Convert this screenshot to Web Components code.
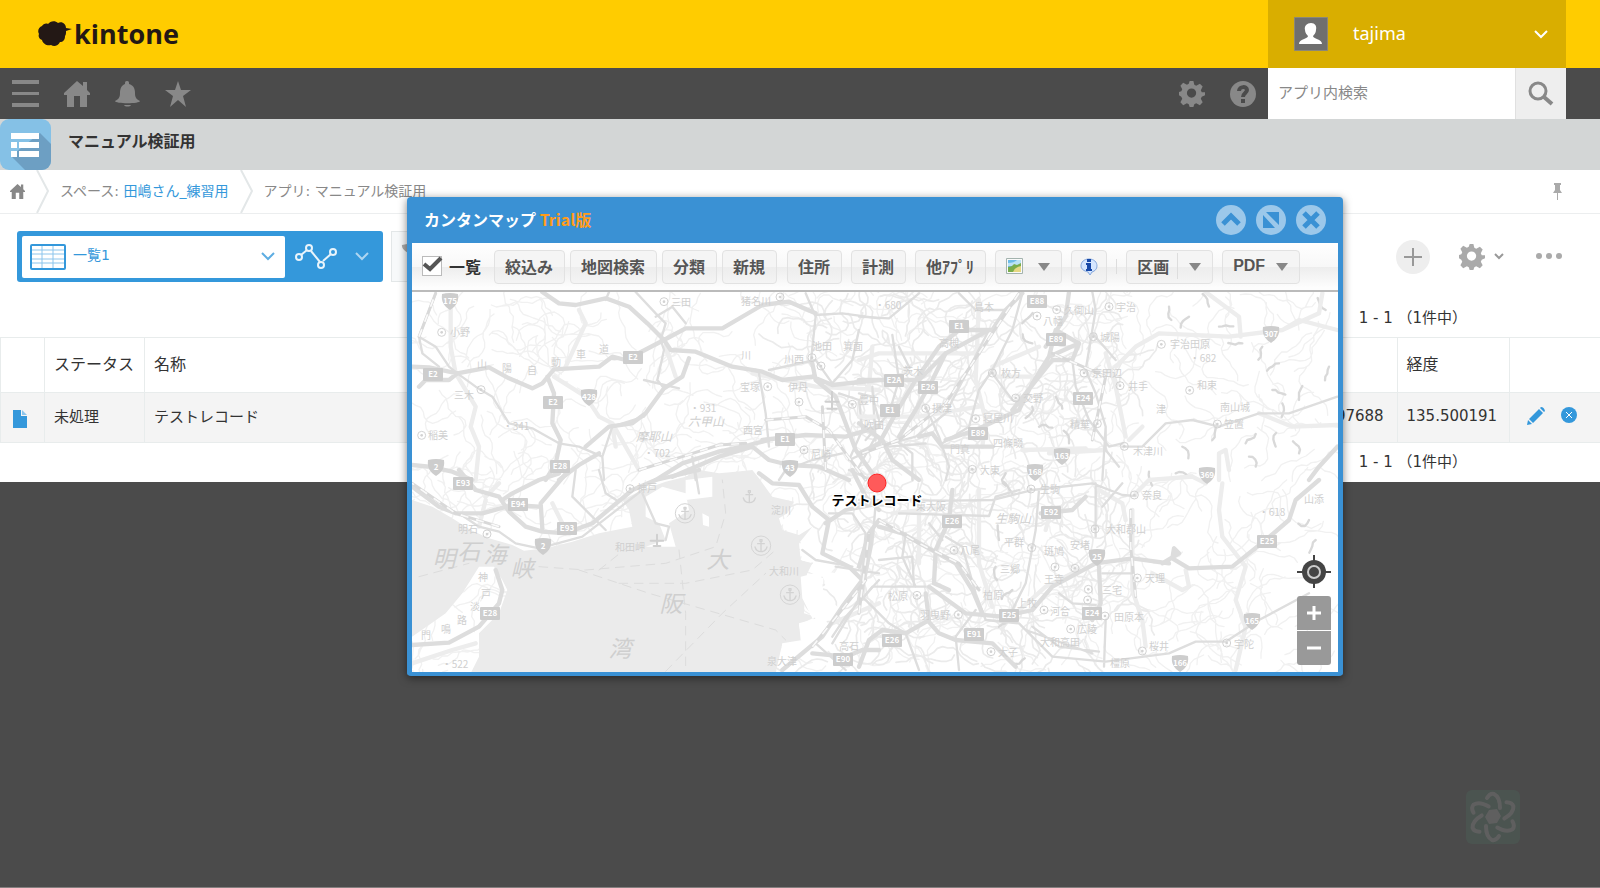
<!DOCTYPE html>
<html lang="ja">
<head>
<meta charset="utf-8">
<title>マニュアル検証用</title>
<style>
    body {
        margin: 0;
        min-height: 100vh;
        box-sizing: border-box;
        background-color: #4b4b4b;
        border-bottom: 1px solid #857f7f;
        font-family: "DejaVu Sans", "Noto Sans CJK JP", sans-serif;
        font-size: 15px;
        color: #333;
        overflow: hidden;
    }
</style>
</head>
<body>
<kintone-app></kintone-app>

<script>
const baseStyle = `
    <style>
        * { box-sizing: border-box; }
        :host { display: block; }
        svg { display: block; flex: none; }
        button {
            margin: 0;
            padding: 0;
            border: 0;
            background: none;
            font: inherit;
            color: inherit;
            display: flex;
            align-items: center;
            cursor: pointer;
        }
        a { color: inherit; text-decoration: none; }
    </style>
`

const gearPath = 'M11 0h4l1 4 2 1 4-2 3 3-2 4 1 2 4 0v3l-4 2-1 2 2 4-3 3-4-2-2 1-1 3h-4l-1-3-2-1-4 2-3-3 2-4-1-2-3-2v-3l3-1 1-2-2-4 3-3 4 2 2-1zM13 8a5 5 0 1 0 0 10 5 5 0 0 0 0-10z'
const housePath = 'M13 0l6 5V1h4v8l3 3v2h-3v12h-7V15h-6v11H3V14H0v-2z'

/**
 * @param {string} name Tag name
 * @param {string} html Content of shadow root
 */
function defineComponent(name, html) {
    const template = document.createElement('template')
    template.innerHTML = baseStyle + html
    customElements.define(name, class extends HTMLElement {
        constructor() {
            super()
            this.attachShadow({ mode: 'open' })
            this.shadowRoot.appendChild(template.content.cloneNode(true))
        }
    })
}

defineComponent('brand-header', `
    <style>
        :host {
            display: flex;
            justify-content: space-between;
            height: 68px;
            padding: 0 34px 0 38px;
            background-color: #fc0;
        }
        .logo { display: flex; align-items: center; gap: 2px; color: #231815; }
        .logo span { font: bold 27px/34px "Open Sans", "Noto Sans", sans-serif; }
        .user {
            width: 298px;
            padding: 0 18px 0 26px;
            background-color: #d9ae00;
            color: white;
            font-size: 18px;
            font-family: "Noto Sans", sans-serif;
        }
        .user span { flex: 1; text-align: left; padding: 0 0 2px 25px; }
    </style>
    <a class="logo" href="#" aria-label="kintone">
        <svg width="34" height="26" viewBox="0 0 34 26" fill="#231815">
            <path d="M10 3c2-3 7-4 10-1 4-2 8 1 8 5l6 1-6 2c0 2 0 4-1 5 0 4-2 6-5 6-2 4-6 5-9 3-4 1-8-1-9-5-3-1-4-4-3-6-2-3 0-7 3-8 1-2 4-3 6-2z"/>
        </svg>
        <span>kintone</span>
    </a>
    <button class="user">
        <svg width="34" height="34" viewBox="0 0 34 34">
            <path fill="#6f6f6f" stroke="#8b8778" d="M.5.5h33v33H.5z"/>
            <path fill="white" d="M17 6c4 0 6 3 5 7 0 3-2 5-3 6 0 3 9 3 9 8H5c0-5 9-5 9-8-1-1-3-3-3-6-1-4 2-7 6-7z"/>
        </svg>
        <span>tajima</span>
        <svg width="14" height="9" viewBox="0 0 14 9" fill="none" stroke="white" stroke-width="2"><path d="M1 1l6 6 6-6"/></svg>
    </button>
`)

defineComponent('global-nav', `
    <style>
        :host {
            display: flex;
            align-items: center;
            height: 51px;
            padding: 0 34px 0 12px;
            background-color: #4b4b4b;
            color: #888;
        }
        nav { display: flex; align-items: center; gap: 25px; }
        .tools { margin-left: auto; margin-right: 12px; }
        form { display: flex; width: 298px; height: 51px; }
        input {
            flex: 1;
            min-width: 0;
            border: 0;
            padding: 0 10px 4px;
            background: white;
            font: 15px "Noto Sans CJK JP", sans-serif;
        }
        input::placeholder { color: #888; }
        .find { width: 51px; justify-content: center; background-color: #eee; border-left: 1px solid #e0e0e0; }
    </style>
    <nav>
        <button aria-label="メニュー"><svg width="27" height="27" viewBox="0 0 27 27" fill="#888"><path d="M0 0h27v4H0zM0 12h27v3H0zM0 23h27v4H0z"/></svg></button>
        <button aria-label="ポータル"><svg width="26" height="26" viewBox="0 0 26 26" fill="#888"><path d="${housePath}"/></svg></button>
        <button aria-label="通知"><svg width="25" height="26" viewBox="0 0 25 26" fill="#888"><path d="M12 0c2 0 2 1 2 3 4 1 6 4 6 9 0 4 1 6 5 8 0 3-25 3-25 0 4-2 5-4 5-8 0-5 2-8 5-9 0-2 0-3 2-3zM9 24h7c-1 2-6 2-7 0z"/></svg></button>
        <button aria-label="お気に入り"><svg width="26" height="26" viewBox="0 0 26 26" fill="#888"><path d="M13 0l3 9h10l-8 6 3 11-8-7-8 7 3-11-8-6h10z"/></svg></button>
    </nav>
    <nav class="tools">
        <button aria-label="設定"><svg width="26" height="26" viewBox="0 0 27 28" fill="#888" fill-rule="evenodd"><path d="${gearPath}"/></svg></button>
        <button aria-label="ヘルプ"><svg width="26" height="26" viewBox="0 0 26 26"><circle cx="13" cy="13" r="13" fill="#888"/><path fill="none" stroke="#4b4b4b" stroke-width="4" d="M9 10c0-5 8-5 8-1 0 3-4 3-4 7"/><path fill="#4b4b4b" d="M11 18h4v4h-4z"/></svg></button>
    </nav>
    <form>
        <input type="text" placeholder="アプリ内検索" aria-label="アプリ内検索">
        <button class="find" type="button" aria-label="検索"><svg width="26" height="26" viewBox="0 0 26 26" fill="none" stroke="#888"><circle cx="10" cy="10" r="8" stroke-width="3"/><path stroke-width="4" d="M16 16l8 7"/></svg></button>
    </form>
`)

defineComponent('app-title', `
    <style>
        :host { display: flex; gap: 17px; height: 51px; background-color: #d3d6d6; }
        h1 { margin: 0; padding-top: 9px; font: bold 16px/24px "Noto Sans CJK JP", sans-serif; }
    </style>
    <svg width="51" height="51" viewBox="0 0 51 51">
        <clipPath id="round"><rect width="51" height="51" rx="9"/></clipPath>
        <g clip-path="url(#round)">
            <path fill="#85c1e6" d="M0 0h51v51H0z"/>
            <path fill="#6d9fc3" d="M40 14l11 11v26H25L11 37z"/>
            <path fill="white" d="M11 14h28v6H11zM11 23h6v6h-6zM19 23h20v6H19zM11 32h6v6h-6zM19 32h20v6H19z"/>
        </g>
    </svg>
    <h1><slot></slot></h1>
`)

defineComponent('bread-crumbs', `
    <style>
        :host {
            display: flex;
            align-items: center;
            height: 44px;
            padding: 0 38px 0 10px;
            background-color: white;
            border-bottom: 1px solid #eceeef;
            font-size: 14px;
            color: #888;
        }
        .sep { margin: 0 11px; }
        span { padding-bottom: 4px; }
        span a { color: #3498db; }
        .pin { margin-left: auto; }
    </style>
    <a href="#" aria-label="ポータル"><svg width="15" height="15" viewBox="0 0 26 26" fill="#888"><path d="${housePath}"/></svg></a>
    <svg class="sep" width="13" height="43" viewBox="0 0 13 43" fill="none" stroke="#e3e7e8" stroke-width="2"><path d="M1 0l11 21L1 43"/></svg>
    <span>スペース: <a href="#">田嶋さん_練習用</a></span>
    <svg class="sep" width="13" height="43" viewBox="0 0 13 43" fill="none" stroke="#e3e7e8" stroke-width="2"><path d="M1 0l11 21L1 43"/></svg>
    <span>アプリ: マニュアル検証用</span>
    <button class="pin" aria-label="固定"><svg width="9" height="17" viewBox="0 0 9 17" fill="#aaa"><path d="M1 0h7v2H7v5l2 3H5v7H4v-7H0l2-3V2H1z"/></svg></button>
`)

defineComponent('view-bar', `
    <style>
        :host {
            display: flex;
            align-items: center;
            justify-content: space-between;
            padding: 17px 38px 17px 17px;
        }
        .group { display: flex; align-items: center; }
        .views {
            display: flex;
            align-items: center;
            width: 366px;
            height: 51px;
            padding-left: 5px;
            background-color: #3498db;
            border-radius: 3px;
        }
        label {
            display: grid;
            grid-template-columns: 36px 1fr 14px;
            align-items: center;
            width: 263px;
            height: 42px;
            padding: 0 10px 0 8px;
            background-color: white;
            border-radius: 2px;
        }
        label svg { grid-row: 1; grid-column: 1; pointer-events: none; }
        label svg:last-child { grid-column: 3; }
        select {
            grid-row: 1;
            grid-column: 1 / -1;
            appearance: none;
            border: 0;
            height: 34px;
            padding: 0 0 4px 43px;
            background: none;
            font: 14px "DejaVu Sans", "Noto Sans CJK JP", sans-serif;
            color: #3498db;
        }
        .graph { gap: 17px; margin-left: 9px; }
        .filter {
            width: 51px;
            height: 51px;
            margin-left: 8px;
            padding-left: 9px;
            background-color: #f7f9fa;
            border: 1px solid #e3e7e8;
        }
        .add { width: 34px; height: 34px; justify-content: center; border-radius: 50%; background-color: #eee; }
        .config { gap: 9px; margin-left: 29px; }
        .more { margin-left: 32px; }
    </style>
    <div class="group">
        <div class="views">
            <label>
                <svg width="36" height="26" viewBox="0 0 36 26" fill="none" stroke="#3498db"><rect x="1" y="1" width="34" height="24" rx="1" stroke-width="2"/><path stroke="#8cc5ec" d="M2 6h32M2 10h32M2 15h32M2 19h32M12 2v22M23 2v22"/></svg>
                <select aria-label="一覧の選択"><option>一覧1</option></select>
                <svg width="14" height="9" viewBox="0 0 14 9" fill="none" stroke="#5dade2" stroke-width="2"><path d="M1 1l6 6 6-6"/></svg>
            </label>
            <button class="graph" aria-label="グラフ">
                <svg width="44" height="27" viewBox="0 0 44 27" fill="none" stroke="#e9f4fb" stroke-width="2"><path d="M7 12l6-5M17 8l9 11M29 18l8-7"/><circle cx="5" cy="14" r="3"/><circle cx="15" cy="5" r="3"/><circle cx="27" cy="22" r="3"/><circle cx="39" cy="9" r="3"/></svg>
                <svg width="14" height="9" viewBox="0 0 14 9" fill="none" stroke="#aed6f1" stroke-width="2"><path d="M1 1l6 6 6-6"/></svg>
            </button>
        </div>
        <button class="filter" aria-label="絞り込む"><svg width="26" height="26" viewBox="0 0 26 26" fill="#aaa"><path d="M1 1q12-3 24 0c1 5-7 8-8 12v9l-7 4V13C9 9 0 6 1 1z"/></svg></button>
    </div>
    <div class="group">
        <button class="add" aria-label="レコードを追加"><svg width="18" height="18" viewBox="0 0 18 18" stroke="#999" stroke-width="2"><path d="M9 0v18M0 9h18"/></svg></button>
        <button class="config" aria-label="アプリの設定">
            <svg width="26" height="26" viewBox="0 0 27 28" fill="#aaa" fill-rule="evenodd"><path d="${gearPath}"/></svg>
            <svg width="10" height="7" viewBox="0 0 10 7" fill="none" stroke="#999" stroke-width="2"><path d="M1 1l4 4 4-4"/></svg>
        </button>
        <button class="more" aria-label="オプション"><svg width="26" height="7" viewBox="0 0 26 7" fill="#aaa"><circle cx="3" cy="3" r="3"/><circle cx="13" cy="3" r="3"/><circle cx="23" cy="3" r="3"/></svg></button>
    </div>
`)

defineComponent('page-range', `
    <style>
        :host {
            display: flex;
            justify-content: flex-end;
            padding: 0 133px 0 0;
            height: 38px;
            line-height: 39px;
            font-size: 15px;
        }
        span { white-space: pre; }
    </style>
    <span><slot></slot></span>
`)

defineComponent('record-table', `
    <style>
        table { width: 100%; border-collapse: collapse; table-layout: fixed; }
        th, td { border: 1px solid #e8ecec; text-align: left; font-weight: normal; padding: 0 0 0 9px; }
        th { height: 55px; padding-bottom: 5px; font-size: 16px; }
        td { height: 50px; padding-bottom: 4px; background-color: #f4f4f4; font-size: 15px; }
        td:first-child { padding: 3px 0 0 12px; }
        th:last-child, td:last-child { border-right: 0; }
        .mark { width: 44px; }
        .status { width: 100px; }
        .lat { width: 104px; }
        .lng { width: 112px; }
        .edit { width: 91px; }
        div { display: flex; align-items: center; gap: 16px; padding-left: 8px; }
    </style>
    <table>
        <thead>
            <tr>
                <th class="mark"></th>
                <th class="status">ステータス</th>
                <th>名称</th>
                <th class="lat"></th>
                <th class="lng">経度</th>
                <th class="edit"></th>
            </tr>
        </thead>
        <tbody>
            <tr>
                <td><a href="#" aria-label="詳細"><svg width="14" height="18" viewBox="0 0 14 18"><path fill="#3498db" d="M0 0h8v6h6v12H0z"/><path fill="#8cc5ec" d="M9 0l5 5H9z"/></svg></a></td>
                <td>未処理</td>
                <td>テストレコード</td>
                <td>34.697688</td>
                <td>135.500191</td>
                <td>
                    <div>
                        <button aria-label="編集"><svg width="18" height="18" viewBox="0 0 18 18" fill="#3498db"><path d="M0 18l1-5 4 4zM2 12L12 2l4 4L6 16zM13 1l1-1q3 0 4 4l-1 1z"/></svg></button>
                        <button aria-label="削除"><svg width="17" height="17" viewBox="0 0 17 17"><circle cx="8" cy="8" r="8" fill="#3498db"/><path stroke="white" stroke-width="1" d="M5 5l6 6M11 5l-6 6"/></svg></button>
                    </div>
                </td>
            </tr>
        </tbody>
    </table>
`)

defineComponent('tool-button', `
    <style>
        :host { display: flex; }
        button {
            height: 34px;
            padding: 0 11px 2px 10px;
            border: 1px solid #e2e2e2;
            border-radius: 4px;
            background: linear-gradient(#f5f5f5 50%, #ededed 51%, #f4f4f4);
            color: #555;
            font: bold 16px "Liberation Sans", "Noto Sans CJK JP", sans-serif;
            white-space: nowrap;
        }
        :host([tight]) button { padding: 0 8px; }
    </style>
    <button><slot></slot></button>
`)

defineComponent('map-toolbar', `
    <style>
        :host {
            display: flex;
            align-items: center;
            height: 49px;
            padding: 0 10px;
            background: linear-gradient(#fff, #f8f8f8 50%, #ededed 51%, #fdfdfd 95%);
            border-bottom: 2px solid #bbb;
            color: #333;
        }
        label { display: flex; align-items: center; gap: 6px; margin-right: 13px; padding-bottom: 2px; font: bold 16px "Noto Sans CJK JP", sans-serif; }
        .check { display: grid; }
        .check > * { grid-area: 1 / 1; }
        .check svg { pointer-events: none; }
        input { appearance: none; width: 20px; height: 20px; margin: 0; background: white; border: 1px solid #bbb; }
        .near, .far { display: flex; align-items: center; gap: 5px; }
        .far { gap: 9px; margin-left: 10px; }
        .line { width: 1px; height: 15px; background: #ddd; }
        .rule { width: 1px; height: 26px; margin: 0 11px 0 8px; background: #ddd; }
        .arrow { margin-top: 2px; }
        .drop { margin-left: 15px; }
        .next { margin-left: 11px; }
    </style>
    <label>
        <span class="check">
            <input type="checkbox" checked>
            <svg width="21" height="20" viewBox="0 0 21 20" fill="none" stroke="#555" stroke-width="4"><path d="M2 8l6 5L19 2"/></svg>
        </span>
        <span>一覧</span>
    </label>
    <div class="near">
        <tool-button>絞込み</tool-button>
        <tool-button>地図検索</tool-button>
        <tool-button>分類</tool-button>
        <tool-button>新規</tool-button>
    </div>
    <div class="far">
        <tool-button>住所</tool-button>
        <tool-button>計測</tool-button>
        <tool-button>他ｱﾌﾟﾘ</tool-button>
        <tool-button>
            <svg width="17" height="16" viewBox="0 0 17 16"><path fill="#fafafa" stroke="#a3b3ae" d="M.5.5h16v15H.5z"/><path fill="#6bbbe8" d="M2 2h13v12H2z"/><path fill="#b9e2f5" d="M2 5q6 0 9-3h4v6H2z"/><path fill="#79ad4b" d="M2 9q4 0 6-3l3 1 4-2v9H2z"/><path fill="#e6d783" d="M7 14q2-5 8-6v6z"/></svg>
            <svg class="arrow drop" width="12" height="8" viewBox="0 0 12 8" fill="#888"><path d="M0 0h12L6 8z"/></svg>
        </tool-button>
        <tool-button tight>
            <svg width="18" height="18" viewBox="0 0 18 18"><path fill="#d5e6ff" stroke="#86a8dc" d="M9 1c5 0 8 3 8 7 0 3-2 5-5 6l-2 3-2-3c-4-1-7-3-7-6 0-4 3-7 8-7z"/><path fill="#1849a8" d="M7 1h4v3H7zM6 5h5v6h1v2H6v-2h1V7H6z"/></svg>
        </tool-button>
        <span class="line"></span>
        <tool-button>
            <span>区画</span>
            <span class="rule"></span>
            <svg class="arrow" width="12" height="8" viewBox="0 0 12 8" fill="#888"><path d="M0 0h12L6 8z"/></svg>
        </tool-button>
        <tool-button>
            <span>PDF</span>
            <svg class="arrow next" width="12" height="8" viewBox="0 0 12 8" fill="#888"><path d="M0 0h12L6 8z"/></svg>
        </tool-button>
    </div>
`)

// Road map. Lines are drawn on a grid with three units to a pixel, in four tiles.
const seaPath = `
    M39 660L100 680 160 715 215 750 270 775 340 795 375 812 440 805 520 785 600 760 700 740 690 690 670 660 730 630 800 605
    860 590 900 570 960 580 1010 575 1060 570 1080 595 1120 650 1185 665 1165 700 1140 715 1150 750 1200 765 1240 740
    1200 790 1205 840 1240 850 1220 890 1215 1000 1250 1010 1200 1035 1210 1080 1150 1090 1130 1180 215 1180
    240 1130 240 1060 300 1000 325 930 310 900 285 860 240 860 190 940 140 1000 90 1035 39 1070z`

const landPaths = `
    M740 650l50-30 70 20 10 50-60 40 20 70-90 0 60-20-20-50-40-20z
    M860 600l80-10 0 60-80 10z M910 700l20 10 0 30-18-5z
    M1205 890l60-15 15 110 30-10 20 20-90 20-30-60z M1260 870l80 15 20 50-60 10z
    M1200 1030l70-20 25 30-60 60-30-20z M1150 1090l60 30-20 30-50 0z M1200 790l70 10-10 50-50-8z M1150 720l50-30 15 60-60 0z`

const tiles = [
    { x: 0, y: 0, wide: `
        M430 36L480 70 530 75 620 55 690 80 745 130 795 180 860 145 970 145 1090 75 1170 65 1250 100
        M39 260L90 262 175 280 270 262 330 295 400 325 430 310 465 268 600 260 640 230 680 240 795 180
        M60 320L80 300 150 300 175 280
        M795 180L815 210 890 215 1000 260 1090 275 1150 300 1240 290 1300 315 1440 300
        M445 290L465 340 460 430 485 480 470 550 440 600
        M770 600L850 550 960 515 1050 495 1110 480
        M560 500L630 440 700 430 740 400 795 325 850 290 870 235
        M39 555L90 560 160 575 220 600
        M1240 250L1250 300 1310 350 1340 430 1370 510 1420 580
        M820 590L960 530 1060 500 1110 540 1170 555 1260 560 1350 600
        M480 600L540 555 600 520
        M1090 480L1220 465 1340 470 1440 440`,
      thin: `
        M110 40L60 170 110 200 150 260 175 280 230 320 280 350 330 430 400 445 480 490 540 500 610 530
        M60 170L70 220 120 260 M710 36L770 100 800 130 785 180 795 210 775 300
        M770 110L820 80 860 130 M735 300L840 325 M775 300L795 325 735 410 640 440 610 530 615 600
        M630 36L620 60 M1220 40L1250 110 1235 250 M1250 105L1330 100 1440 115
        M1080 280L1100 400 1110 500 M1110 270L1250 240 1300 310 1360 240 1380 150
        M1320 340L1380 360 1390 450 1350 540 1440 500 M1140 600L1160 570 1240 540 1330 520
        M890 600L880 530 M1420 320L1430 480`,
      pale: `
        M155 60L155 200 170 280 230 380 215 440 240 500 230 600 M500 260L560 130 540 90
        M465 290L560 350 600 410 640 430 720 570 M800 200L830 290 M640 440L650 500
        M1060 280L1250 320 1440 330 M1420 200L1410 320` },
    { x: 1380, y: 0, wide: `
        M0 520L60 490 110 400 170 300 240 200 300 150 400 150 440 90 490 40
        M0 300L100 300 180 300 260 220 390 150
        M120 470L170 390 220 300 260 220
        M260 480L350 450 480 390 520 310 570 230 660 190 M570 230L590 150 660 190 640 240
        M460 390L580 240 640 240
        M630 36L620 110 560 200
        M180 470L220 460 250 500 400 500
        M1350 600L1380 560 1435 500
        M0 430L70 480 100 540 180 600`,
      thin: `
        M700 36L710 90 680 270 710 340 740 440 730 600 M640 240L650 320 690 420 750 500 790 490
        M100 165L120 300 90 400 20 480 M300 40L350 90 440 90 M0 110L90 115 180 40
        M490 40L460 150 400 270 360 330 330 440 250 490 M400 280L460 360 490 370
        M200 380L240 470 270 560 260 600 M390 150L260 400 170 470 60 500
        M790 500L850 500 920 430 1000 420 1080 440 1200 400 1290 400 1435 350
        M0 560L50 470 90 500 200 490 M740 440L740 510 780 560 M700 160L770 240
        M0 340L40 350 60 420 M120 200L150 260 M110 480L160 520 160 600`,
      pale: `
        M0 240L60 220 360 220 M770 260L830 200 900 160 1110 170 1270 150 1320 120 1435 150
        M1040 36L1140 110 1145 170 M1270 150L1380 100 1390 40 M740 220L770 320 800 470 M490 510L680 505
        M370 500L380 420 350 300 360 60 M0 410L180 410 360 380 M540 200L400 260 410 290 520 290
        M570 520L740 510 M850 440L810 480 M1200 400L1300 440 1435 435 M1080 600L1080 520 1100 510 1110 570` },
    { x: 0, y: 570, wide: `
        M39 50L120 110 170 130 250 130 340 105 420 110
        M180 0L230 60 300 80 330 125 380 170 430 185 500 190 580 160 640 110 700 60 770 30 900 0
        M310 90L340 70 420 30 480 10 M430 175L425 100 510 0
        M290 300L310 360 300 400 240 470 150 518 39 525
        M1080 10L1120 40 1200 45 1240 110 1290 150 1270 250 1350 290 1390 330 1330 410 1270 500 1150 600
        M1240 550L1340 560 1390 540 1440 540
        M1360 0L1400 80 1440 120 M1280 160L1340 120 1440 100`,
      thin: `
        M180 130L240 170 300 185 350 220 420 235 550 200 640 130 730 60
        M530 0L520 80 570 130 620 180 M600 0L620 70 660 95 M730 70L770 160 810 170 800 210
        M1300 500L1340 440 1440 330 M1430 100L1420 220 1390 370 1300 520
        M1290 130L1360 130 1400 190 1390 300 M1310 290L1440 310 M1250 520L1340 600
        M1210 240L1250 270 1360 290 M1350 0L1440 40 M890 10L900 70`,
      pale: `M240 170L260 90 M500 180L460 100 M300 40L260 80 M1440 400L1300 460 M39 580L160 540 230 520` },
    { x: 1380, y: 570, wide: `
        M0 290L30 190 60 150 M0 390L20 280 40 180
        M60 170L130 190 200 230 290 280 340 360 370 430
        M210 350L320 430 430 440 520 420 580 350 710 280 820 265 930 280 M910 280L960 250 945 235 940 265 990 295 1120 290 1220 210 1290 150 1310 90 1380 30
        M270 150L230 240 225 340 270 360 M545 130L640 120 680 80
        M205 450L240 490 290 510 400 520 470 590
        M0 590L30 510 70 480 140 490 210 450 200 370
        M720 290L725 400 700 450 M280 60L270 150`,
      thin: `
        M0 90L270 92 400 90 520 60 700 40 790 75 830 78 M120 130L390 138 410 80 480 60
        M710 40L710 200 M790 40L730 110 M540 60L530 180 500 340 460 420
        M260 200L310 230 350 370 380 450 480 460 580 560 740 575 930 550 1010 515 1100 515 1200 450 1350 370
        M0 370L90 460 140 490 180 600 M740 450L735 590 M200 350L40 350 0 400
        M600 370L640 400 710 405 M210 160L250 210 M350 420L290 500 300 600
        M140 190L130 260 170 350 M60 270L160 260 165 350 M730 310L820 310 820 260 M500 480L700 550
        M0 100L100 110 M520 470L600 530 720 545`,
      pale: `
        M180 80L180 280 M360 60L360 280 400 410 M580 110L560 180 M1090 40L1080 120 1090 200 1160 290 1130 390 1160 470 1130 600
        M830 70L870 30 1000 20 1040 40 M820 120L820 360 850 450 860 530 M980 300L990 350 970 360 880 310
        M470 430L560 350 660 300 M100 130L190 120 M720 60L790 100 800 150` }
]

const railPaths = `
    M300 740L170 700 39 610 M720 570L850 530 960 495 1040 490 M1100 420L1220 410 1290 450 1340 520 1400 600
    M1860 40L1760 190 1640 370 1500 480 1390 520 M1440 720L1560 790 1680 850 1740 930 M2080 480L2120 290 1960 220
    M1380 1000L1410 760 M2195 690L2195 800 2210 950 M60 170L110 40 M1280 570L1270 380 M1240 1100L1400 900`

const ferryPaths = `
    M60 890L210 850 M420 860L560 870 800 850 950 800 980 700 970 600 M540 870L750 940 1130 1050 1160 1080
    M660 910L860 910 1060 870 1130 810 M840 810L860 1000 860 1174 M800 1174L970 1000 1100 880 M600 870L700 790`

const shields = [
    ['E2', 101, 281], ['E2', 463, 365], ['E2', 701, 231], ['E28', 484, 557], ['E1', 1159, 476],
    ['E1', 1681, 138], ['E88', 1915, 64], ['E89', 1971, 176], ['E2A', 1484, 300], ['E26', 1587, 322], ['E1', 1472, 391],
    ['E24', 2051, 354], ['E89', 1738, 460], ['E93', 191, 608], ['E94', 356, 672], ['E93', 503, 744], ['E28', 274, 999],
    ['E90', 1331, 1138], ['E26', 1660, 722], ['E92', 1956, 695], ['E25', 2603, 782], ['E25', 1829, 1006], ['E24', 2080, 998],
    ['E91', 1724, 1063], ['E26', 1478, 1079]
]

const routes = [
    ['428', 571, 350], ['2', 110, 560], ['43', 1174, 565], ['307', 2616, 162], ['163', 1990, 528], ['168', 1909, 576],
    ['369', 2425, 586], ['2', 431, 798], ['25', 2095, 830], ['165', 2560, 1022], ['166', 2342, 1150], ['175', 153, 62]
]

// text, x, y of centre
const towns = [
    ['小野', 182, 157], ['三木', 194, 346], ['三田', 845, 66], ['猪名川', 1072, 62], ['宝塚', 1052, 320], ['伊丹', 1198, 322],
    ['川西', 1186, 236], ['箕面', 1361, 199], ['稲美', 117, 466], ['西宮', 1062, 450], ['尼崎', 1265, 522], ['山', 248, 253],
    ['陽', 324, 263], ['自', 398, 271], ['動', 470, 245], ['車', 545, 222], ['道', 616, 207], ['・931', 912, 383],
    ['・702', 775, 520], ['・341', 350, 437], ['池田', 1268, 198], ['川', 1042, 226], ['豊中', 1410, 360],
    ['・680', 1466, 74], ['島本', 1756, 82], ['久御山', 2040, 90], ['宇治', 2180, 80], ['八幡', 1962, 124], ['城陽', 2134, 170],
    ['高槻', 1650, 190], ['宇治田原', 2374, 193], ['・682', 2412, 235], ['枚方', 1835, 280], ['京田辺', 2123, 280],
    ['井手', 2216, 318], ['和束', 2425, 316], ['茨木', 1542, 272], ['摂津', 1628, 385], ['寝屋川', 1796, 415], ['交野', 1902, 355],
    ['津', 2285, 386], ['南山城', 2508, 380], ['精華', 2042, 431], ['笠置', 2505, 433], ['四條畷', 1826, 489], ['門真', 1684, 506],
    ['木津川', 2246, 514], ['大東', 1772, 569], ['吹田', 1425, 435], ['明石', 208, 748], ['神戸', 745, 624], ['和田岬', 694, 800],
    ['淀川', 1147, 690], ['大和川', 1155, 874], ['神', 252, 890], ['戸', 262, 942], ['淡', 229, 978], ['路', 190, 1020],
    ['鳴', 142, 1046], ['門', 82, 1064], ['泉大津', 1150, 1142], ['高石', 1350, 1098], ['・522', 168, 1152], ['東大阪', 1596, 678],
    ['生駒', 1952, 626], ['奈良', 2258, 646], ['大和郡山', 2180, 748], ['平群', 1846, 786], ['斑鳩', 1966, 812], ['安堵', 2042, 796],
    ['三郷', 1834, 868], ['八尾', 1714, 810], ['王寺', 1964, 896], ['天理', 2268, 894], ['柏原', 1782, 946], ['松原', 1496, 948],
    ['羽曳野', 1608, 1004], ['上牧', 1884, 968], ['河合', 1984, 994], ['三宅', 2138, 930], ['田原本', 2190, 1010], ['広陵', 2064, 1048],
    ['大和高田', 1984, 1086], ['太子', 1826, 1115], ['橿原', 2164, 1150], ['桜井', 2280, 1098], ['宇陀', 2536, 1092],
    ['・618', 2618, 696], ['山添', 2744, 658]
]

const rings = [
    [128, 157], [246, 329], [795, 65], [1143, 51], [1106, 320], [1239, 233], [68, 466], [1215, 510], [1200, 366], [1266, 258],
    [1360, 373], [1973, 89], [2130, 80], [1914, 108], [2083, 170], [2287, 193], [1780, 279], [2055, 279], [2163, 317], [2372, 331],
    [1850, 354], [1730, 416], [2095, 431], [2455, 432], [2176, 499], [1720, 568], [1580, 385], [264, 762], [693, 626],
    [2206, 645], [1896, 627], [2088, 747], [1665, 811], [1898, 803], [1968, 861], [2028, 865], [2215, 894], [1554, 946],
    [1678, 1004], [2015, 1047], [2118, 1008], [1776, 1115], [2230, 1113], [2483, 1089], [2068, 928], [2066, 960], [1935, 990]
]

class OsakaMap extends HTMLElement {
    constructor() {
        super()
        this.attachShadow({ mode: 'open' })
        this.shadowRoot.innerHTML = `${baseStyle}
            <style>
                :host { display: grid; background-color: white; overflow: hidden; }
                svg { grid-area: 1 / 1; width: 100%; height: 380px; }
                .line path { fill: none; stroke-linejoin: round; stroke-linecap: round; }
                .line .sea { fill: #ebebeb; }
                .line .land { fill: white; }
                .line .gap { stroke-linecap: butt; }
                .town { font-size: 10px; fill: #d0d0d0; }
                .badge { font-size: 8px; fill: white; font-weight: bold; }
                .bay { font-size: 23px; fill: #cfcfcf; font-style: italic; }
                .hill { font-size: 12px; fill: #cfcfcf; font-style: italic; }
                .pin { font-size: 13px; font-weight: bold; fill: black; stroke: white; stroke-width: 3px; paint-order: stroke; }
                text { text-anchor: middle; font-family: "Noto Sans CJK JP", sans-serif; }
            </style>
            <svg class="line" viewBox="39 36 2778 1140" preserveAspectRatio="xMidYMid slice">
                <path d="${this.minorRoads(560, 39, 2800)}" stroke="#f1f1f1" stroke-width="4"/>
                <path d="${this.minorRoads(240, 1240, 2160)}" stroke="#ebebeb" stroke-width="5"/>
                <path d="${this.ridges()}" stroke="#d9d9d9" stroke-width="7"/>
                <path class="sea" d="${seaPath}"/>
                <path class="land" d="${landPaths}"/>
                ${tiles.map(n => `<g transform="translate(${n.x} ${n.y})">
                    <path d="${n.pale}" stroke="#ededed" stroke-width="13"/>
                    <path d="${n.thin}" stroke="#dedede" stroke-width="7"/>
                    <path d="${n.wide}" stroke="#dddddd" stroke-width="13"/>
                </g>`).join('')}
                <path d="${railPaths}" stroke="#d9d9d9" stroke-width="9"/>
                <path class="gap" d="${railPaths}" stroke="#fafafa" stroke-width="5" stroke-dasharray="24 24"/>
                <path d="${ferryPaths}" stroke="#dcdcdc" stroke-width="3" stroke-dasharray="26 20"/>
                ${rings.map(n => `<circle cx="${n[0]}" cy="${n[1]}" r="12" fill="none" stroke="#d3d3d3" stroke-width="3"/><circle cx="${n[0]}" cy="${n[1]}" r="4" fill="#d3d3d3"/>`).join('')}
                ${[[858, 700, 29], [1086, 797, 29], [1173, 944, 29], [1051, 650, 0]].map(n => `<g transform="translate(${n[0]} ${n[1]})">
                    <circle r="${n[2]}" fill="none" stroke="#d5d5d5" stroke-width="3"/>
                    <path d="M0-12V17M-10-6H10M-18 4Q-14 18 0 18 14 18 18 4M-3-18h6v5h-6z" stroke="#d3d3d3" stroke-width="4"/>
                </g>`).join('')}
                <path d="M755 782h38M774 764v34M764 798h20M1280 365h38M1299 335v54M1285 386h28" stroke="#d0d0d0" stroke-width="6"/>
            </svg>
            <svg viewBox="0 0 926 380" preserveAspectRatio="xMidYMid slice">
                ${towns.map(n => this.label(n, 'town', 4)).join('')}
                ${shields.map(n => {
                    const [x, y] = this.toPixel(n)
                    return `<rect x="${x - 10}" y="${y - 6}" width="20" height="13" rx="1" fill="#cdcdcd"/>` + this.label(n, 'badge', 3)
                }).join('')}
                ${routes.map(n => {
                    const [x, y] = this.toPixel(n)
                    return `<path d="M${x - 8} ${y - 7}q8-2 16 0c1 8-2 12-8 16-6-4-9-8-8-16z" fill="#cdcdcd"/>` + this.label(n, 'badge', 3)
                }).join('')}
                ${[['明', 136, 838], ['石', 210, 815], ['海', 288, 825], ['峡', 370, 868], ['大', 957, 841], ['阪', 817, 973], ['湾', 664, 1107]].map(n => this.label(n, 'bay', 8)).join('')}
                ${[['六甲山', 920, 427], ['摩耶山', 766, 470], ['生駒山', 1842, 718]].map(n => this.label(n, 'hill', 4)).join('')}
                <circle cx="465" cy="191" r="9" fill="#ff5a5a" stroke="#f22"/>
                <text class="pin" x="465" y="213">テストレコード</text>
            </svg>`
    }

    toPixel(item) {
        return [Math.round((item[1] - 39) / 3), Math.round((item[2] - 36) / 3)]
    }

    label(item, kind, drop) {
        const [x, y] = this.toPixel(item)
        return `<text class="${kind}" x="${x}" y="${y + drop}">${item[0]}</text>`
    }

    random() {
        this.seed = ((this.seed || 7) * 16807) % 2147483647
        return this.seed / 2147483647
    }

    wander(x, y, steps, length) {
        let angle = this.random() * 6
        let d = `M${x | 0} ${y | 0}`
        for (let i = 0; i < steps; i++) {
            angle += (this.random() - 0.5) * 1.6
            x += Math.cos(angle) * length
            y += Math.sin(angle) * length
            d += `L${x | 0} ${y | 0}`
        }
        return d
    }

    minorRoads(count, left, right) {
        let d = ''
        for (let i = 0; i < count; i++)
            d += this.wander(left + this.random() * (right - left), 36 + this.random() * 1140, 12, 16)
        return d
    }

    // Prefecture borders in the mountains
    ridges() {
        const spots = [[1870, 130], [1900, 190], [1900, 380], [1920, 440], [1970, 350], [2310, 80], [2370, 110], [2430, 80],
            [2460, 140], [2530, 190], [2590, 200], [2640, 250], [2620, 330], [2650, 370], [2700, 360], [2790, 260], [2780, 90],
            [2350, 500], [2440, 480], [2540, 490], [2630, 500], [2700, 520], [2250, 575], [2330, 580], [2570, 560], [2730, 720],
            [1820, 580], [1840, 640], [1800, 780], [1790, 860], [1840, 930], [1800, 1040], [1840, 1150], [2750, 780], [2010, 490]]
        return spots.map(n => this.wander(n[0], n[1], 4, 11)).join('')
    }
}
customElements.define('osaka-map', OsakaMap)

defineComponent('map-controls', `
    <style>
        :host { display: flex; flex-direction: column; align-items: center; }
        .zoom {
            width: 34px;
            height: 34px;
            margin-top: 1px;
            justify-content: center;
            background-color: #999;
        }
        .in { border-radius: 3px 3px 0 0; margin-top: 8px; }
        .out { border-radius: 0 0 3px 3px; }
    </style>
    <button aria-label="現在地"><svg width="34" height="33" viewBox="0 0 34 33" fill="none"><path stroke="#444" stroke-width="2" d="M17 0v33M0 17h34"/><circle cx="17" cy="17" r="12" fill="#444"/><circle cx="17" cy="17" r="6" stroke="#ccc" stroke-width="2"/></svg></button>
    <button class="zoom in" aria-label="拡大"><svg width="14" height="14" viewBox="0 0 14 14" stroke="white" stroke-width="3"><path d="M7 0v14M0 7h14"/></svg></button>
    <button class="zoom out" aria-label="縮小"><svg width="14" height="14" viewBox="0 0 14 14" stroke="white" stroke-width="3"><path d="M0 7h14"/></svg></button>
`)

defineComponent('map-window', `
    <style>
        :host {
            background-color: #3a91d4;
            border: solid #3a91d4;
            border-width: 0 5px 4px;
            border-radius: 4px;
            box-shadow: 0 2px 8px rgba(0, 0, 0, 0.5);
        }
        header {
            display: flex;
            align-items: center;
            height: 46px;
            padding: 0 12px;
            font: bold 16px "Noto Sans CJK JP", sans-serif;
            color: white;
        }
        h2 { flex: 1; margin: 0; font: inherit; padding-bottom: 2px; }
        em { font-style: normal; color: #ff9c1a; }
        nav { display: flex; gap: 10px; }
        .body { position: relative; }
        map-controls { position: absolute; right: 7px; bottom: 7px; }
    </style>
    <header>
        <h2>カンタンマップ <em>Trial版</em></h2>
        <nav>
            <button aria-label="折りたたむ"><svg width="30" height="30" viewBox="0 0 30 30"><circle cx="15" cy="15" r="15" fill="#9cc8ea"/><path fill="none" stroke="#3a91d4" stroke-width="5" d="M7 19l8-8 8 8"/></svg></button>
            <button aria-label="最大化"><svg width="30" height="30" viewBox="0 0 30 30"><circle cx="15" cy="15" r="15" fill="#9cc8ea"/><path fill="#3a91d4" d="M10 7h13v13zM7 10l12 13H7z"/></svg></button>
            <button aria-label="閉じる"><svg width="30" height="30" viewBox="0 0 30 30"><circle cx="15" cy="15" r="15" fill="#9cc8ea"/><path stroke="#3a91d4" stroke-width="5" d="M8 8l14 14M22 8L8 22"/></svg></button>
        </nav>
    </header>
    <map-toolbar></map-toolbar>
    <div class="body">
        <osaka-map></osaka-map>
        <map-controls></map-controls>
    </div>
`)

defineComponent('chat-badge', `
    <style>
        :host { opacity: 0.8; }
    </style>
    <svg width="54" height="54" viewBox="0 0 54 54" fill="none" stroke="#656565" stroke-width="4" stroke-linecap="round">
        <rect width="54" height="54" rx="6" fill="#4b5752" stroke="none"/>
        ${[0, 60, 120, 180, 240, 300].map(n => `<path d="M21 8Q24 3 28 4 34 7 34 18" transform="rotate(${n} 27 27)"/>`).join('')}
        <path fill="#656565" stroke="none" d="M23 20l8-1 4 7-4 7-8 1-4-7z"/>
    </svg>
`)

defineComponent('kintone-app', `
    <style>
        main { background-color: white; padding-bottom: 1px; }
        map-window { position: absolute; top: 197px; left: 407px; right: 257px; }
        chat-badge { position: absolute; right: 80px; bottom: 44px; }
    </style>
    <brand-header></brand-header>
    <global-nav></global-nav>
    <app-title>マニュアル検証用</app-title>
    <main>
        <bread-crumbs></bread-crumbs>
        <view-bar></view-bar>
        <page-range>1 - 1 （1件中）</page-range>
        <record-table></record-table>
        <page-range>1 - 1 （1件中）</page-range>
    </main>
    <map-window></map-window>
    <chat-badge></chat-badge>
`)
</script>
</body>
</html>
